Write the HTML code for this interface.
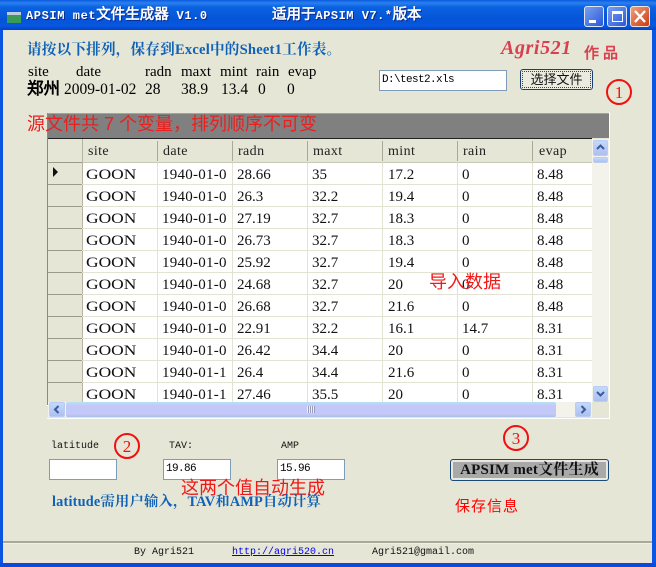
<!DOCTYPE html>
<html><head><meta charset="utf-8">
<style>
html,body{margin:0;padding:0}
body{width:656px;height:567px;overflow:hidden;position:relative;background:#e6e6d6;font-family:"Liberation Serif","Noto Serif CJK SC",serif}
div,span,a{position:absolute;white-space:nowrap;box-sizing:border-box}
.m{font-family:"Liberation Mono","WenQuanYi Zen Hei",monospace}
.c{position:static;font-size:14.5px;letter-spacing:0}
.b{color:#0f62b8;font-weight:bold;font-size:14.6px;letter-spacing:.2px}
.k{font-size:15px;color:#000;line-height:16px}
.k2{font-size:15.5px}
.r{color:#f01818;font-family:"Liberation Sans","WenQuanYi Zen Hei",sans-serif}
.in{background:#fff;border:1px solid #7f9db9;font:11px/19px "Liberation Mono",monospace;letter-spacing:-.6px;padding-left:2px;color:#000}
.h{font-size:14px;color:#222;top:144px;line-height:16px;letter-spacing:.4px}
.t{font-size:15px;color:#111;line-height:16px}
.t:first-child{transform:scaleX(1.16);transform-origin:left center}
.t:nth-child(2){letter-spacing:.25px}
.vl{width:1px;background:#e3e3d4;top:163px;height:239px}
.hl{height:1px;background:#e3e3d4;left:82px;width:510px}
.hh{left:48px;width:34px;height:1px;background:#9c9b88}
.sb{background:linear-gradient(#c4d8fb,#aebff0);border:1px solid #b9cdf2;border-radius:2px}
</style></head><body>
<!-- title bar -->
<div style="left:0;top:0;width:656px;height:30px;background:linear-gradient(#0a5be0 0,#2a80ee 3px,#0a62e0 7px,#0554d8 20px,#0757e0 26px,#0342c8 30px)"></div>
<div style="left:7px;top:12px;width:14px;height:11px;background:#3a9a58;border-top:3px solid #bcd"></div>
<div class="m" style="left:26px;top:8px;color:#fff;font-size:12px;font-weight:bold;line-height:16px;letter-spacing:.6px;text-shadow:1px 1px 0 #0a2a8a">APSIM met<span class="c">文件生成器</span> V1.0</div>
<div class="m" style="left:272px;top:8px;color:#fff;font-size:12px;font-weight:bold;line-height:16px;letter-spacing:.5px;text-shadow:1px 1px 0 #0a2a8a"><span class="c">适用于</span>APSIM V7.*<span class="c">版本</span></div>
<div style="left:584px;top:6px;width:20px;height:21px;background:linear-gradient(135deg,#7aa0f0,#2a58d8);border:1px solid #dfe8fb;border-radius:3px"></div>
<div style="left:589px;top:20px;width:7px;height:3px;background:#fff"></div>
<div style="left:607px;top:6px;width:20px;height:21px;background:linear-gradient(135deg,#7aa0f0,#2a58d8);border:1px solid #dfe8fb;border-radius:3px"></div>
<div style="left:612px;top:11px;width:11px;height:11px;border:1px solid #fff;border-top-width:3px"></div>
<div style="left:630px;top:6px;width:20px;height:21px;background:linear-gradient(135deg,#f0a080,#c83c10);border:1px solid #f3e3dc;border-radius:3px"></div>
<svg style="position:absolute;left:630px;top:6px" width="20" height="21"><path d="M5 5L15 16M15 5L5 16" stroke="#fff" stroke-width="2.4"/></svg>
<!-- frame -->
<div style="left:0;top:30px;width:3px;height:537px;background:#0a56e2"></div>
<div style="left:652px;top:30px;width:4px;height:537px;background:#0a56e2"></div>
<div style="left:0;top:563px;width:656px;height:4px;background:#0a4ad8"></div>

<div class="b" style="left:27px;top:42px;line-height:16px">请按以下排列，保存到Excel中的Sheet1工作表。</div>
<div class="k" style="left:28px;top:64px">site</div>
<div class="k" style="left:76px;top:64px">date</div>
<div class="k" style="left:145px;top:64px">radn</div>
<div class="k" style="left:181px;top:64px">maxt</div>
<div class="k" style="left:220px;top:64px">mint</div>
<div class="k" style="left:256px;top:64px">rain</div>
<div class="k" style="left:288px;top:64px">evap</div>
<div class="k" style="left:27px;top:81px;font-size:16.5px;font-weight:bold;font-family:'WenQuanYi Zen Hei',sans-serif">郑州</div>
<div class="k k2" style="left:64px;top:82px">2009-01-02</div>
<div class="k k2" style="left:145px;top:82px">28</div>
<div class="k k2" style="left:181px;top:82px">38.9</div>
<div class="k k2" style="left:221px;top:82px">13.4</div>
<div class="k k2" style="left:258px;top:82px">0</div>
<div class="k k2" style="left:287px;top:82px">0</div>

<div style="left:501px;top:36px;color:#d84050;font:italic bold 20px/24px 'Liberation Serif',serif;letter-spacing:.6px">Agri521</div>
<div style="left:584px;top:44px;color:#d84050;font:bold 15px/20px 'WenQuanYi Zen Hei',sans-serif;letter-spacing:4px">作品</div>

<div class="in" style="left:379px;top:70px;width:128px;height:21px">D:\test2.xls</div>
<div style="left:520px;top:69px;width:73px;height:21px;background:#ecebe0;border:1px solid #1c3f70;border-radius:3px;outline:1px dotted #444;outline-offset:-3px;font:13px/19px 'WenQuanYi Zen Hei',sans-serif;text-align:center;color:#111">选择文件</div>
<svg style="position:absolute;left:604px;top:77px" width="30" height="30"><circle cx="15" cy="15" r="12" fill="none" stroke="#f01010" stroke-width="2"/><text x="15" y="21" text-anchor="middle" fill="#f01010" font-size="17" font-family="Liberation Serif">1</text></svg>

<!-- grid -->
<div style="left:47px;top:112px;width:563px;height:294px;background:#e6e6d6;border-right:1px solid #fff;border-bottom:1px solid #fff"></div>
<div style="left:47px;top:113px;width:562px;height:25px;background:#808080;border-top:1px solid #a4a498"></div>
<div style="left:47px;top:138px;width:545px;height:1px;background:#222"></div>
<div style="left:47px;top:113px;width:1px;height:292px;background:#8a8a80"></div>
<div style="left:82px;top:163px;width:510px;height:239px;background:#fff"></div>
<div style="left:592px;top:139px;width:17px;height:263px;background:#f3f3ec"></div>

<div style="left:48px;top:162px;width:544px;height:1px;background:#c8c8b6"></div>
<div style="left:82px;top:141px;width:1px;height:20px;background:#aaa998"></div>
<div style="left:157px;top:141px;width:1px;height:20px;background:#aaa998"></div>
<div style="left:232px;top:141px;width:1px;height:20px;background:#aaa998"></div>
<div style="left:307px;top:141px;width:1px;height:20px;background:#aaa998"></div>
<div style="left:382px;top:141px;width:1px;height:20px;background:#aaa998"></div>
<div style="left:457px;top:141px;width:1px;height:20px;background:#aaa998"></div>
<div style="left:532px;top:141px;width:1px;height:20px;background:#aaa998"></div>
<div style="left:82px;top:139px;width:1px;height:263px;background:#b5b4a2"></div>

<div class="vl" style="left:157px"></div><div class="vl" style="left:232px"></div><div class="vl" style="left:307px"></div><div class="vl" style="left:382px"></div><div class="vl" style="left:457px"></div><div class="vl" style="left:532px"></div>
<div class="hl" style="top:184px"></div><div class="hl" style="top:206px"></div><div class="hl" style="top:228px"></div><div class="hl" style="top:250px"></div><div class="hl" style="top:272px"></div><div class="hl" style="top:294px"></div><div class="hl" style="top:316px"></div><div class="hl" style="top:338px"></div><div class="hl" style="top:360px"></div><div class="hl" style="top:382px"></div>
<div class="hh" style="top:162px"></div><div class="hh" style="top:184px"></div><div class="hh" style="top:206px"></div><div class="hh" style="top:228px"></div><div class="hh" style="top:250px"></div><div class="hh" style="top:272px"></div><div class="hh" style="top:294px"></div><div class="hh" style="top:316px"></div><div class="hh" style="top:338px"></div><div class="hh" style="top:360px"></div><div class="hh" style="top:382px"></div>
<svg style="position:absolute;left:52px;top:166px" width="8" height="12"><path d="M1 1L6 6L1 11Z" fill="#111"/></svg>

<div class="h" style="left:88px">site</div><div class="h" style="left:163px">date</div><div class="h" style="left:238px">radn</div><div class="h" style="left:313px">maxt</div><div class="h" style="left:388px">mint</div><div class="h" style="left:463px">rain</div><div class="h" style="left:539px">evap</div>

<div style="left:0;top:167px;width:600px;height:22px"><span class="t" style="left:86px">GOON</span><span class="t" style="left:162px">1940-01-0</span><span class="t" style="left:237px">28.66</span><span class="t" style="left:312px">35</span><span class="t" style="left:388px">17.2</span><span class="t" style="left:462px">0</span><span class="t" style="left:537px">8.48</span></div>
<div style="left:0;top:189px;width:600px;height:22px"><span class="t" style="left:86px">GOON</span><span class="t" style="left:162px">1940-01-0</span><span class="t" style="left:237px">26.3</span><span class="t" style="left:312px">32.2</span><span class="t" style="left:388px">19.4</span><span class="t" style="left:462px">0</span><span class="t" style="left:537px">8.48</span></div>
<div style="left:0;top:211px;width:600px;height:22px"><span class="t" style="left:86px">GOON</span><span class="t" style="left:162px">1940-01-0</span><span class="t" style="left:237px">27.19</span><span class="t" style="left:312px">32.7</span><span class="t" style="left:388px">18.3</span><span class="t" style="left:462px">0</span><span class="t" style="left:537px">8.48</span></div>
<div style="left:0;top:233px;width:600px;height:22px"><span class="t" style="left:86px">GOON</span><span class="t" style="left:162px">1940-01-0</span><span class="t" style="left:237px">26.73</span><span class="t" style="left:312px">32.7</span><span class="t" style="left:388px">18.3</span><span class="t" style="left:462px">0</span><span class="t" style="left:537px">8.48</span></div>
<div style="left:0;top:255px;width:600px;height:22px"><span class="t" style="left:86px">GOON</span><span class="t" style="left:162px">1940-01-0</span><span class="t" style="left:237px">25.92</span><span class="t" style="left:312px">32.7</span><span class="t" style="left:388px">19.4</span><span class="t" style="left:462px">0</span><span class="t" style="left:537px">8.48</span></div>
<div style="left:0;top:277px;width:600px;height:22px"><span class="t" style="left:86px">GOON</span><span class="t" style="left:162px">1940-01-0</span><span class="t" style="left:237px">24.68</span><span class="t" style="left:312px">32.7</span><span class="t" style="left:388px">20</span><span class="t" style="left:462px">0</span><span class="t" style="left:537px">8.48</span></div>
<div style="left:0;top:299px;width:600px;height:22px"><span class="t" style="left:86px">GOON</span><span class="t" style="left:162px">1940-01-0</span><span class="t" style="left:237px">26.68</span><span class="t" style="left:312px">32.7</span><span class="t" style="left:388px">21.6</span><span class="t" style="left:462px">0</span><span class="t" style="left:537px">8.48</span></div>
<div style="left:0;top:321px;width:600px;height:22px"><span class="t" style="left:86px">GOON</span><span class="t" style="left:162px">1940-01-0</span><span class="t" style="left:237px">22.91</span><span class="t" style="left:312px">32.2</span><span class="t" style="left:388px">16.1</span><span class="t" style="left:462px">14.7</span><span class="t" style="left:537px">8.31</span></div>
<div style="left:0;top:343px;width:600px;height:22px"><span class="t" style="left:86px">GOON</span><span class="t" style="left:162px">1940-01-0</span><span class="t" style="left:237px">26.42</span><span class="t" style="left:312px">34.4</span><span class="t" style="left:388px">20</span><span class="t" style="left:462px">0</span><span class="t" style="left:537px">8.31</span></div>
<div style="left:0;top:365px;width:600px;height:22px"><span class="t" style="left:86px">GOON</span><span class="t" style="left:162px">1940-01-1</span><span class="t" style="left:237px">26.4</span><span class="t" style="left:312px">34.4</span><span class="t" style="left:388px">21.6</span><span class="t" style="left:462px">0</span><span class="t" style="left:537px">8.31</span></div>
<div style="left:0;top:387px;width:600px;height:15px;overflow:hidden"><span class="t" style="left:86px">GOON</span><span class="t" style="left:162px">1940-01-1</span><span class="t" style="left:237px">27.46</span><span class="t" style="left:312px">35.5</span><span class="t" style="left:388px">20</span><span class="t" style="left:462px">0</span><span class="t" style="left:537px">8.31</span></div>

<!-- vertical scrollbar -->
<div class="sb" style="left:593px;top:140px;width:15px;height:16px"></div>
<svg style="position:absolute;left:593px;top:140px" width="15" height="16"><path d="M4 9L7.5 5.5L11 9" fill="none" stroke="#3a5a9a" stroke-width="2"/></svg>
<div class="sb" style="left:593px;top:157px;width:15px;height:6px"></div>
<div class="sb" style="left:593px;top:386px;width:15px;height:16px"></div>
<svg style="position:absolute;left:593px;top:386px" width="15" height="16"><path d="M4 6L7.5 9.5L11 6" fill="none" stroke="#3a5a9a" stroke-width="2"/></svg>
<!-- horizontal scrollbar -->
<div style="left:48px;top:402px;width:544px;height:16px;background:#f3f3ec;height:15px"></div>
<div class="sb" style="left:49px;top:402px;width:16px;height:15px"></div>
<svg style="position:absolute;left:49px;top:402px" width="16" height="15"><path d="M9.5 4L6 7.5L9.5 11" fill="none" stroke="#3a5a9a" stroke-width="2"/></svg>
<div style="left:66px;top:402px;width:490px;height:15px;background:linear-gradient(#b8e0f4 0,#c4c8f8 4px,#c4c8f8 12px,#a8c0e8 15px);border-radius:2px"></div>
<div style="left:307px;top:406px;width:8px;height:7px;background:repeating-linear-gradient(90deg,#eef 0 1px,#99b 1px 2px)"></div>
<div class="sb" style="left:575px;top:402px;width:16px;height:15px"></div>
<svg style="position:absolute;left:575px;top:402px" width="16" height="15"><path d="M6.5 4L10 7.5L6.5 11" fill="none" stroke="#3a5a9a" stroke-width="2"/></svg>
<div style="left:47px;top:418px;width:563px;height:1px;background:#fff"></div>
<div style="left:609px;top:112px;width:1px;height:307px;background:#fff"></div>
<div style="left:592px;top:402px;width:17px;height:16px;background:#e6e6d6"></div>

<div class="r" style="left:27px;top:114px;font-size:18px;line-height:20px;color:#e82020;letter-spacing:0">源文件共 7 个变量，排列顺序不可变</div>
<div class="r" style="left:429px;top:272px;font-size:18px;line-height:20px">导入数据</div>

<!-- bottom inputs -->
<div class="m" style="left:51px;top:441px;font-size:10px;line-height:12px;color:#111">latitude</div>
<svg style="position:absolute;left:112px;top:431px" width="30" height="30"><circle cx="15" cy="15" r="12" fill="none" stroke="#f01010" stroke-width="2"/><text x="15" y="21" text-anchor="middle" fill="#f01010" font-size="17" font-family="Liberation Serif">2</text></svg>
<div class="m" style="left:169px;top:441px;font-size:10px;line-height:12px;color:#111">TAV:</div>
<div class="m" style="left:281px;top:441px;font-size:10px;line-height:12px;color:#111">AMP</div>
<div class="in" style="left:49px;top:459px;width:68px;height:21px"></div>
<div class="in" style="left:163px;top:459px;width:68px;height:21px">19.86</div>
<div class="in" style="left:277px;top:459px;width:68px;height:21px">15.96</div>
<div class="r" style="left:181px;top:477px;font-size:18px;line-height:22px">这两个值自动生成</div>
<div class="b" style="left:52px;top:494px;font-size:14.3px;line-height:16px">latitude需用户输入，TAV和AMP自动计算</div>

<svg style="position:absolute;left:501px;top:423px" width="30" height="30"><circle cx="15" cy="15" r="12" fill="none" stroke="#f01010" stroke-width="2"/><text x="15" y="21" text-anchor="middle" fill="#f01010" font-size="17" font-family="Liberation Serif">3</text></svg>
<div style="left:450px;top:459px;width:159px;height:22px;background:#a9a9a9;border:1px solid #1c4a78;border-radius:3px;box-shadow:inset 0 0 0 2px #e8e8e0;font:bold 15px/20px 'Liberation Serif','Noto Serif CJK SC',serif;text-align:center;color:#111;letter-spacing:.2px">APSIM met文件生成</div>
<div class="r" style="left:455px;top:498px;font-size:15px;line-height:18px;letter-spacing:1px;color:#f00">保存信息</div>

<!-- status bar -->
<div style="left:3px;top:541px;width:649px;height:2px;background:#a9a89a"></div>
<div style="left:3px;top:543px;width:649px;height:1px;background:#f0f0e4"></div>
<div style="left:3px;top:559px;width:649px;height:4px;background:#ece4d8"></div>
<div class="m" style="left:134px;top:546px;font-size:10px;line-height:13px;color:#111">By Agri521</div>
<a class="m" href="#" style="left:232px;top:546px;font-size:10px;line-height:13px;color:#00e">http://agri520.cn</a>
<div class="m" style="left:372px;top:546px;font-size:10px;line-height:13px;color:#111">Agri521@gmail.com</div>
</body></html>
